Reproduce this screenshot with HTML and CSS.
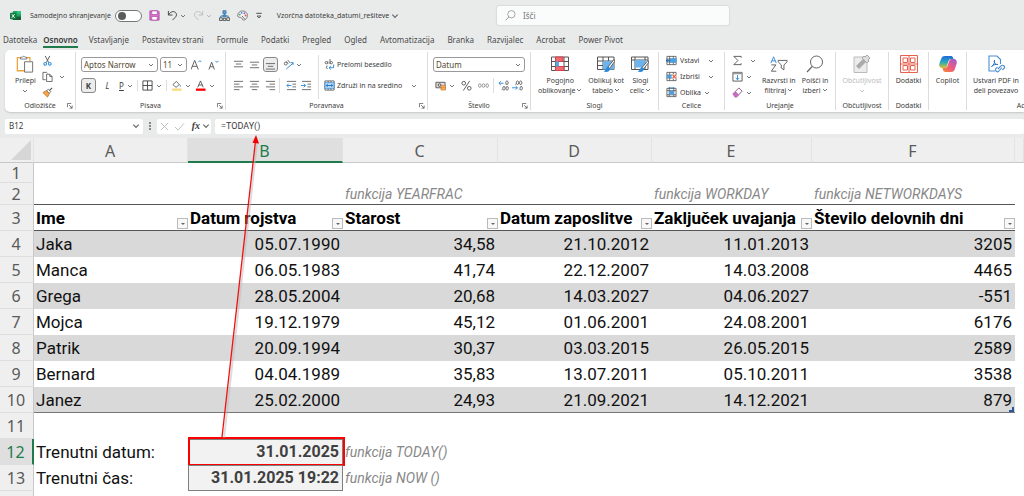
FILE: index.html
```html
<!DOCTYPE html>
<html lang="sl">
<head>
<meta charset="utf-8">
<title>Vzorčna datoteka_datumi_rešitev</title>
<link rel="stylesheet" href="styles.css">
</head>
<body>
<svg class="sprite" aria-hidden="true">
  <symbol id="chev" viewBox="0 0 6 6"><path d="M1 2l2 2 2-2" fill="none" stroke="#666" stroke-width=".9"/></symbol>
  <symbol id="launch" viewBox="0 0 7 7"><path d="M.5 5V.5H5M2.500 2.500l3.500 3.500M6 3v3H3" fill="none" stroke="#555" stroke-width=".9"/></symbol>
  <symbol id="excel" viewBox="0 0 12 12"><rect x="3" y="1" width="9" height="10" rx="1" fill="#21a366"/><path d="M7.500 1H11a1 1 0 0 1 1 1v2H7.500z" fill="#33c481"/><path d="M3 7h9v3a1 1 0 0 1-1 1H4a1 1 0 0 1-1-1z" fill="#185c37"/><rect y="3" width="7" height="7" rx="1" fill="#107c41"/><path d="M2 4.500l3 4M5 4.500l-3 4" stroke="#fff" stroke-width="1"/></symbol>
  <symbol id="save" viewBox="0 0 12 12"><path d="M1 1h9l1 1v9H1z" fill="#d97bd0" stroke="#b146a8"/><path d="M3 1h6v4H3zM3 7h6v4H3z" fill="#fff" stroke="#b146a8" stroke-width=".8"/></symbol>
  <symbol id="undo" viewBox="0 0 12 12"><path d="M1.500 1v4.500H6M1.500 5.500C4 1.500 7 1 9 2.500s1.600 4 0 5.500L6 11" fill="none" stroke="currentColor"/></symbol>
  <symbol id="redo" viewBox="0 0 12 12"><path d="M10.500 1v4.500H6M10.500 5.500C8 1.500 5 1 3 2.500s-1.600 4 0 5.500L6 11" fill="none" stroke="currentColor"/></symbol>
  <symbol id="org" viewBox="0 0 12 12"><path d="M6 4v2.500M2 9V6.500h8V9" fill="none" stroke="#1e75c0"/><path d="M4.300.700h3.400v3.300H4.300zM4.500 5.500h3v2h-3z" fill="#5aa5e0" stroke="#35699a" stroke-width=".8"/><path d="M.6 8.500h3v3h-3zM4.700 9h2.600v2.500H4.700zM8.400 8.500h3v3h-3z" fill="#e9ebea" stroke="#444" stroke-width=".9"/></symbol>
  <symbol id="palette" viewBox="0 0 12 12"><path d="M7 11c-1.500 0-1-1.500-2-2.500S1 8.500.700 6.500C.5 3 3.500 1 6 1c3 0 5.400 2 5.400 5S9 11 7 11z" fill="#f5f5f5" stroke="#666" stroke-width=".9"/><circle cx="3" cy="5" r="1" fill="#3fa66b"/><circle cx="5" cy="3.200" r="1" fill="#3d8fd8"/><circle cx="8" cy="3.500" r="1" fill="#9b59b6"/><circle cx="9.300" cy="6" r="1" fill="#e54b4b"/><path d="M5.500 6.500L8.500 10" stroke="#666"/></symbol>
  <symbol id="overflow" viewBox="0 0 6 6"><path d="M1 1h4" stroke="#555" stroke-width=".8"/><path d="M1.500 3h3L3 4.500z" fill="none" stroke="#555" stroke-width=".7"/></symbol>
  <symbol id="lens" viewBox="0 0 18 18"><circle cx="10.500" cy="7" r="6" fill="none" stroke="currentColor"/><path d="M6.200 11.500L1 17" stroke="currentColor" stroke-width="1.200"/></symbol>
  <symbol id="paste" viewBox="0 0 20 20"><path d="M5 3H1.500v14.500H10M12 3h3.500v4" fill="none" stroke="#eba53c" stroke-width="1.400"/><path d="M5 4.500v-2h2a1.600 1.600 0 0 1 3 0h2v2z" fill="#fff" stroke="#666" stroke-width=".9"/><path d="M9.500 7.500h9v11.500h-9z" fill="#fff" stroke="#666"/></symbol>
  <symbol id="cut" viewBox="0 0 12 12"><path d="M3.500 1l4 7.500M8.500 1l-4 7.500" stroke="#555" fill="none"/><circle cx="3.500" cy="9.600" r="1.500" fill="none" stroke="#3a96dd" stroke-width="1.200"/><circle cx="8.500" cy="9.600" r="1.500" fill="none" stroke="#3a96dd" stroke-width="1.200"/></symbol>
  <symbol id="copy" viewBox="0 0 12 12"><path d="M4 9.500H1v-8h4l1 1M5 3.500h3.500l2.500 2.500v5.500H5zM8.500 3.500V6H11" fill="none" stroke="#555" stroke-width=".9"/></symbol>
  <symbol id="brush" viewBox="0 0 12 12"><path d="M1 6l4-2 3 3-2 4z" fill="#f6a54a" stroke="#c9782a"/><path d="M5 4l2-1.500L9.500 5 8 7z" fill="#fff" stroke="#555" stroke-width=".8"/><path d="M8 4l3-3" stroke="#555" stroke-width="1.300"/></symbol>
  <symbol id="grow" viewBox="0 0 12 12"><path d="M0 11.500l4-10 4 10M1.500 8h5" fill="none" stroke="#555"/><path d="M8 3.500l1.700-1.700 1.700 1.700" fill="none" stroke="#2b88d8"/></symbol>
  <symbol id="shrink" viewBox="0 0 12 12"><path d="M1 11.500l3-8 3 8M2.200 8.500h3.600" fill="none" stroke="#555"/><path d="M8 2l1.700 1.700L11.400 2" fill="none" stroke="#2b88d8"/></symbol>
  <symbol id="borders" viewBox="0 0 12 12"><path d="M1 1h10v10H1zM6 1v10M1 6h10" fill="none" stroke="#444"/></symbol>
  <symbol id="fill" viewBox="0 0 12 12"><path d="M2 5l4-3.500 3 3.500-3.500 3z" fill="#fff" stroke="#555" stroke-width=".9"/><path d="M9.500 4.500q2 2 .8 3.500-1.300-.5-.8-3.500z" fill="#2b88d8"/><rect x="1" y="9.300" width="10.500" height="2.500" fill="#fbd982"/></symbol>
  <symbol id="color" viewBox="0 0 12 12"><path d="M3 8l3-7 3 7M4 5.500h4" fill="none" stroke="#555"/><rect x="1" y="9.300" width="10.500" height="2.500" fill="#f00"/></symbol>
  <symbol id="vtop" viewBox="0 0 12 12"><path d="M1 2.500h10M3 5.500h6M1 8.500h10" stroke="#555" stroke-width=".9"/></symbol>
  <symbol id="vmid" viewBox="0 0 12 12"><path d="M1 3.500h10M3 6.500h6M1 9.500h10" stroke="#555" stroke-width=".9"/></symbol>
  <symbol id="vbot" viewBox="0 0 12 12"><path d="M1 5h10M3 8h6M1 11h10" stroke="#555" stroke-width=".9"/></symbol>
  <symbol id="hleft" viewBox="0 0 12 12"><path d="M1 1.500h10M1 4.500h6M1 7.500h10M1 10.500h6" stroke="#555" stroke-width=".9"/></symbol>
  <symbol id="hmid" viewBox="0 0 12 12"><path d="M1 1.500h10M3 4.500h6M1 7.500h10M3 10.500h6" stroke="#555" stroke-width=".9"/></symbol>
  <symbol id="hright" viewBox="0 0 12 12"><path d="M1 1.500h10M5 4.500h6M1 7.500h10M5 10.500h6" stroke="#555" stroke-width=".9"/></symbol>
  <symbol id="orient" viewBox="0 0 12 12"><circle cx="3" cy="5" r="1.600" fill="none" stroke="#555" stroke-width=".9"/><path d="M3.500 2.500l2 2.500M5 1l3 3.500" fill="none" stroke="#555" stroke-width=".9"/><path d="M3.500 11L11 4.500M8.500 4H11v2.500" fill="none" stroke="#2b88d8"/></symbol>
  <symbol id="outdent" viewBox="0 0 12 12"><path d="M1 1.500h10M7 4.500h4M7 7.500h4M1 10.500h10" stroke="#555" stroke-width=".9"/><path d="M6 6H1M3 4L1 6l2 2" fill="none" stroke="#2b88d8"/></symbol>
  <symbol id="indent" viewBox="0 0 12 12"><path d="M1 1.500h10M7 4.500h4M7 7.500h4M1 10.500h10" stroke="#555" stroke-width=".9"/><path d="M0 6h5M3 4l2 2-2 2" fill="none" stroke="#2b88d8"/></symbol>
  <symbol id="wrap" viewBox="0 0 12 12"><circle cx="2.500" cy="4" r="1.300" fill="none" stroke="#555" stroke-width=".9"/><path d="M4.200 2.500V5.500M6.500 0v5.500" stroke="#555" stroke-width=".9"/><circle cx="8" cy="4" r="1.300" fill="none" stroke="#555" stroke-width=".9"/><path d="M4 7.500a1.500 1.500 0 1 0 0 3" fill="none" stroke="#555" stroke-width=".9"/><path d="M10.500 6v3.500H5.500M7.500 7.500l-2 2 2 2" fill="none" stroke="#2b88d8"/></symbol>
  <symbol id="merge" viewBox="0 0 12 12"><path d="M1 1h10v10H1zM4.500 1v2M7.500 1v2M4.500 9v2M7.500 9v2" fill="none" stroke="#555" stroke-width=".9"/><rect x="1" y="3" width="10" height="6" fill="#b9dcf7" stroke="#2b88d8" stroke-width=".8"/><path d="M2.500 6h7M4 4.500L2.500 6 4 7.500M8 4.500L9.500 6 8 7.500" fill="none" stroke="#1b6ec2"/></symbol>
  <symbol id="money" viewBox="0 0 12 12"><path d="M1 2.500h10v6H1z" fill="#ddd" stroke="#555"/><circle cx="5" cy="5.500" r="1.500" fill="none" stroke="#555"/><path d="M6.500 6h5v5h-5z" fill="#f6b26b" stroke="#c9782a" stroke-width=".7"/><path d="M6.500 8.500h5" stroke="#c9782a" stroke-width=".7"/></symbol>
  <symbol id="percent" viewBox="0 0 12 12"><circle cx="3" cy="3.500" r="2" fill="none" stroke="#555"/><circle cx="9" cy="9" r="2" fill="none" stroke="#555"/><path d="M9.500 1L2.500 11.500" stroke="#555"/></symbol>
  <symbol id="thousand" viewBox="0 0 12 12"><g fill="none" stroke="#888" stroke-width=".9"><ellipse cx="2" cy="6" rx="1.400" ry="2"/><ellipse cx="6" cy="6" rx="1.400" ry="2"/><ellipse cx="10" cy="6" rx="1.400" ry="2"/></g></symbol>
  <symbol id="decup" viewBox="0 0 12 12"><g fill="none" stroke="#555" stroke-width=".9"><ellipse cx="9.800" cy="3" rx="1.300" ry="2"/><ellipse cx="6.500" cy="9" rx="1.300" ry="2"/><ellipse cx="10" cy="9" rx="1.300" ry="2"/><path d="M4 10.500h.8M7.500 4.500h.5"/></g><path d="M6 3.500H1M3 1.500l-2 2 2 2" fill="none" stroke="#2b88d8"/></symbol>
  <symbol id="decdown" viewBox="0 0 12 12"><g fill="none" stroke="#555" stroke-width=".9"><ellipse cx="6" cy="3" rx="1.300" ry="2"/><ellipse cx="9.500" cy="3" rx="1.300" ry="2"/><ellipse cx="10" cy="9" rx="1.300" ry="2"/><path d="M3.500 4.500h.8M7.500 10.500h.6"/></g><path d="M0 8.500h6M4 6.500l2 2-2 2" fill="none" stroke="#2b88d8"/></symbol>
  <symbol id="cond" viewBox="0 0 18 18"><path d="M.5 2h17v13.500H.5zM.5 6.500h17M.5 11.500h17M4.500 2v13.500M13 2v13.500" fill="#fff" stroke="#555"/><path d="M4.500 2H12v4.500H4.500zM4.500 11.500H13v4H4.500z" fill="#f06a72" stroke="#d6404b"/><path d="M4.500 6.500H8v5H4.500z" fill="#5aa9e6"/></symbol>
  <symbol id="ftable" viewBox="0 0 18 18"><path d="M.5 2h16.500v12.500H.5zM.5 6H17M.5 10.500H17M6 2v12.500M11.500 2v12.500" fill="#fff" stroke="#555"/><path d="M6 6h11v8.500H6z" fill="#6db3ec"/><path d="M17 4.500l-6 7.500 1.500 1.500L18 6z" fill="#fff" stroke="#555" stroke-width=".9"/><path d="M11 11.500c-2 .5-1.500 3.500-4.500 5 3 1 6.500.500 6.500-3z" fill="#2b88d8"/></symbol>
  <symbol id="cstyle" viewBox="0 0 18 18"><path d="M.5 2h16.500v12.500H.5zM.5 5H17M4 2v12.500M14 2v12.500" fill="#fff" stroke="#555"/><path d="M4 5h10.500v7.500H4z" fill="#6db3ec"/><path d="M17 5.500l-6 7 1.500 1.500L18 7z" fill="#fff" stroke="#555" stroke-width=".9"/><path d="M11 12c-2 .5-1.500 3-4.500 4.500 3 1 6.500.500 6.500-3z" fill="#2b88d8"/></symbol>
  <symbol id="cins" viewBox="0 0 12 12"><path d="M1 1.500h10v9H1zM1 4.500h10M1 7.500h10M4 1.500v9M8 1.500v9" fill="#fff" stroke="#555" stroke-width=".9"/><path d="M4.500 3.500h7v5h-7z" fill="#4b9fe3"/><path d="M5 6H0M2 4L0 6l2 2" fill="none" stroke="#1b6ec2"/></symbol>
  <symbol id="cdel" viewBox="0 0 12 12"><path d="M1 1.500h10v9H1zM1 4.500h10M1 7.500h10M4 1.500v9M8 1.500v9" fill="#fff" stroke="#555" stroke-width=".9"/><path d="M1 4h5v4H1z" fill="#4b9fe3"/><path d="M6.500 3.500h5v5h-5z" fill="#fff"/><path d="M7 4l4 4M11 4L7 8" stroke="#e8542c" stroke-width="1.200"/></symbol>
  <symbol id="cfmt" viewBox="0 0 12 12"><path d="M1 1.500h10v9H1zM1 4h10M1 8.500h10M3.500 1.500v9M8.500 1.500v9" fill="#fff" stroke="#555" stroke-width=".9"/><path d="M3.500 4h5v4.500h-5z" fill="#4b9fe3"/><path d="M3.500 0v2M8.500 0v2M3.500 1h5" stroke="#1b6ec2" stroke-width=".8"/></symbol>
  <symbol id="sum" viewBox="0 0 12 12"><path d="M10 3V1.500H2L6.500 6 2 10.500h8V9" fill="none" stroke="#555"/></symbol>
  <symbol id="filldn" viewBox="0 0 12 12"><path d="M1 1.500h10v9.500H1z" fill="#fff" stroke="#555"/><path d="M1 1.500h10v2H1z" fill="#999"/><path d="M6 4.500v5M4 7.500l2 2 2-2" fill="none" stroke="#2b88d8"/></symbol>
  <symbol id="clear" viewBox="0 0 12 12"><path d="M1 7.500L7.500 1l3.500 3.500L5 11H3.500z" fill="#fff" stroke="#8a4f86"/><path d="M1 7.500L4 4.500 7.500 8.500 5 11H3.500z" fill="#c86bc0"/></symbol>
  <symbol id="sort" viewBox="0 0 20 18"><path d="M1 8l3-7 3 7M2 5.500h4" fill="none" stroke="#2b88d8"/><path d="M1.500 10h5l-5 7h5.500" fill="none" stroke="#555"/><path d="M9 5h10v1.500L15.500 10v5.500l-3-2V10L9 6.500z" fill="none" stroke="#555"/></symbol>
  <symbol id="sens" viewBox="0 0 18 18"><path d="M1 2h13v15.500H1z" fill="#ececec" stroke="#bbb"/><path d="M3 11l7-7 3 3-7 7z" fill="#aaa"/><path d="M9 3l2-2 1 1 2-2 3 3-2 2 1 1-2 2z" fill="#ddd" stroke="#aaa"/></symbol>
  <symbol id="addin" viewBox="0 0 18 18"><path d="M.5.5h17v17H.5zM3 3h4.500v4.500H3zM10.500 3H15v4.500h-4.500zM3 10.500h4.500V15H3zM10.500 10.500H15V15h-4.500zM9 .5v17M.5 9h17" fill="#fff" stroke="#e8604f"/></symbol>
  <linearGradient id="cg1" x1="0" y1="0" x2="0" y2="1"><stop offset="0" stop-color="#2368d8"/><stop offset=".5" stop-color="#23a7c0"/><stop offset="1" stop-color="#d8c32b"/></linearGradient>
  <linearGradient id="cg2" x1="1" y1="0" x2="0" y2="1"><stop offset="0" stop-color="#9060d8"/><stop offset=".5" stop-color="#ed5a84"/><stop offset="1" stop-color="#f68a2a"/></linearGradient>
  <symbol id="copilot" viewBox="0 0 18 18"><path d="M6 1h6c1 0 1.700.700 2 1.500L14.500 4H12c-1.400 0-2 .8-2.500 2L8 11c-.5 1.500-1 2-2.500 2H3C.5 13-.3 10.500.500 8L2.500 3C3 1.700 4 1 6 1z" fill="url(#cg1)"/><path d="M12 17H6.500c-1.200 0-2-.8-2.500-2l-.5-2h2.300C7.200 13 8 12.200 8.500 11L10 6.500C10.500 5 11 4 12.500 4H15c2.500 0 3.300 2.500 2.500 5l-2 6c-.5 1.300-1.500 2-3.500 2z" fill="url(#cg2)"/></symbol>
  <symbol id="pdf" viewBox="0 0 18 18"><path d="M8 16H2V1h8l3.500 3.500V9" fill="none" stroke="#4a8fd0" stroke-width="1.100"/><path d="M4.500 11.500c2-1 3.500-4 3-6.500-.8 3 1 5 3.500 4.500-2-.5-4.500 0-6.500 2z" fill="none" stroke="#2b78c8"/><path d="M11 14l3-3a1.800 1.800 0 0 1 3 2.500L15.500 15M15 12.500L12 16a1.800 1.800 0 0 1-3-2.500l1.500-1.300" fill="none" stroke="#4a8fd0" stroke-width="1.100"/></symbol>
</svg>

<div class="app">
  <header class="titlebar">
    <div class="quick">
      <svg class="ic"><use href="#excel"/></svg>
      <label class="autosave">Samodejno shranjevanje <input type="checkbox" role="switch" class="switch"></label>
      <button aria-label="Shrani"><svg class="ic"><use href="#save"/></svg></button>
      <button aria-label="Razveljavi" class="split"><svg class="ic"><use href="#undo"/></svg><svg class="chev"><use href="#chev"/></svg></button>
      <button aria-label="Uveljavi" class="split off"><svg class="ic"><use href="#redo"/></svg><svg class="chev"><use href="#chev"/></svg></button>
      <button aria-label="Struktura"><svg class="ic"><use href="#org"/></svg></button>
      <button aria-label="Barve"><svg class="ic"><use href="#palette"/></svg></button>
      <button aria-label="Več"><svg class="chev big"><use href="#overflow"/></svg></button>
      <button class="docname">Vzorčna datoteka_datumi_rešiteve<svg class="chev big"><use href="#chev"/></svg></button>
    </div>
    <label class="search"><svg class="ic"><use href="#lens"/></svg><input type="search" placeholder="Išči" aria-label="Išči"></label>
  </header>

  <nav class="tabs">
    <a href="#">Datoteka</a><a href="#" class="current">Osnovno</a><a href="#">Vstavljanje</a><a href="#">Postavitev strani</a><a href="#">Formule</a><a href="#">Podatki</a><a href="#">Pregled</a><a href="#">Ogled</a><a href="#">Avtomatizacija</a><a href="#">Branka</a><a href="#">Razvijalec</a><a href="#">Acrobat</a><a href="#">Power Pivot</a>
  </nav>

  <div class="ribbon">
    <section class="group g-clip">
      <div class="body">
        <button class="large"><svg class="bigic"><use href="#paste"/></svg><span>Prilepi</span><svg class="chev"><use href="#chev"/></svg></button>
        <div class="stack">
          <button aria-label="Izreži"><svg class="ic"><use href="#cut"/></svg></button>
          <button aria-label="Kopiraj" class="split wide"><svg class="ic"><use href="#copy"/></svg><svg class="chev"><use href="#chev"/></svg></button>
          <button aria-label="Preslikovalnik oblik"><svg class="ic"><use href="#brush"/></svg></button>
        </div>
      </div>
      <footer>Odložišče<svg class="launch"><use href="#launch"/></svg></footer>
    </section>

    <section class="group g-font">
      <div class="body rows">
        <div class="row tight">
          <span class="pick fontname"><select aria-label="Pisava"><option>Aptos Narrow</option></select><svg class="chev"><use href="#chev"/></svg></span>
          <span class="pick fontsize"><select aria-label="Velikost pisave"><option>11</option></select><svg class="chev"><use href="#chev"/></svg></span>
          <button class="tool" aria-label="Povečaj"><svg class="ic"><use href="#grow"/></svg></button>
          <button class="tool" aria-label="Pomanjšaj"><svg class="ic"><use href="#shrink"/></svg></button>
        </div>
        <div class="row">
          <button class="tool pressed"><b>K</b></button>
          <button class="tool"><i>L</i></button>
          <button class="split"><u>P</u><svg class="chev"><use href="#chev"/></svg></button>
          <button class="split line" aria-label="Obrobe"><svg class="ic"><use href="#borders"/></svg><svg class="chev"><use href="#chev"/></svg></button>
          <button class="split line" aria-label="Barva polnila"><svg class="ic"><use href="#fill"/></svg><svg class="chev"><use href="#chev"/></svg></button>
          <button class="split" aria-label="Barva pisave"><svg class="ic"><use href="#color"/></svg><svg class="chev"><use href="#chev"/></svg></button>
        </div>
      </div>
      <footer>Pisava<svg class="launch"><use href="#launch"/></svg></footer>
    </section>

    <section class="group g-align">
      <div class="body">
        <div class="rows">
          <div class="row none">
            <button class="tool" aria-label="Poravnaj na vrh"><svg class="ic"><use href="#vtop"/></svg></button>
            <button class="tool" aria-label="Poravnaj na sredino"><svg class="ic"><use href="#vmid"/></svg></button>
            <button class="tool pressed" aria-label="Poravnaj na dno"><svg class="ic"><use href="#vbot"/></svg></button>
            <button class="split turn" aria-label="Usmerjenost"><svg class="ic"><use href="#orient"/></svg><svg class="chev"><use href="#chev"/></svg></button>
          </div>
          <div class="row none">
            <button class="tool" aria-label="Levo"><svg class="ic"><use href="#hleft"/></svg></button>
            <button class="tool" aria-label="Sredina"><svg class="ic"><use href="#hmid"/></svg></button>
            <button class="tool" aria-label="Desno"><svg class="ic"><use href="#hright"/></svg></button>
            <button class="tool line" aria-label="Zmanjšaj zamik"><svg class="ic"><use href="#outdent"/></svg></button>
            <button class="tool" aria-label="Povečaj zamik"><svg class="ic"><use href="#indent"/></svg></button>
          </div>
        </div>
        <div class="rows text">
          <button class="row"><svg class="ic"><use href="#wrap"/></svg>Prelomi besedilo</button>
          <button class="row"><svg class="ic"><use href="#merge"/></svg>Združi in na sredino<svg class="chev end"><use href="#chev"/></svg></button>
        </div>
      </div>
      <footer>Poravnava<svg class="launch"><use href="#launch"/></svg></footer>
    </section>

    <section class="group g-num">
      <div class="body rows">
        <span class="pick"><select aria-label="Oblika števila"><option>Datum</option></select><svg class="chev"><use href="#chev"/></svg></span>
        <div class="row tight">
          <button class="split" aria-label="Valuta"><svg class="ic"><use href="#money"/></svg><svg class="chev"><use href="#chev"/></svg></button>
          <button class="tool" aria-label="Odstotek"><svg class="ic"><use href="#percent"/></svg></button>
          <button class="tool" aria-label="Tisočice"><svg class="ic"><use href="#thousand"/></svg></button>
          <button class="tool line" aria-label="Več decimalk"><svg class="ic"><use href="#decup"/></svg></button>
          <button class="tool" aria-label="Manj decimalk"><svg class="ic"><use href="#decdown"/></svg></button>
        </div>
      </div>
      <footer>Število<svg class="launch"><use href="#launch"/></svg></footer>
    </section>

    <section class="group g-style">
      <div class="body">
        <button class="large"><svg class="bigic"><use href="#cond"/></svg><span>Pogojno<br>oblikovanje<svg class="chev"><use href="#chev"/></svg></span></button>
        <button class="large"><svg class="bigic"><use href="#ftable"/></svg><span>Oblikuj kot<br>tabelo<svg class="chev"><use href="#chev"/></svg></span></button>
        <button class="large"><svg class="bigic"><use href="#cstyle"/></svg><span>Slogi<br>celic<svg class="chev"><use href="#chev"/></svg></span></button>
      </div>
      <footer>Slogi</footer>
    </section>

    <section class="group g-cells">
      <div class="body stack">
        <button class="entry"><svg class="ic"><use href="#cins"/></svg>Vstavi<svg class="chev end"><use href="#chev"/></svg></button>
        <button class="entry"><svg class="ic"><use href="#cdel"/></svg>Izbriši<svg class="chev end"><use href="#chev"/></svg></button>
        <button class="entry"><svg class="ic"><use href="#cfmt"/></svg>Oblika<svg class="chev"><use href="#chev"/></svg></button>
      </div>
      <footer>Celice</footer>
    </section>

    <section class="group g-edit">
      <div class="body">
        <div class="stack">
          <button class="entry" aria-label="Samodejna vsota"><svg class="ic"><use href="#sum"/></svg><svg class="chev end"><use href="#chev"/></svg></button>
          <button class="entry" aria-label="Polnilo"><svg class="ic"><use href="#filldn"/></svg><svg class="chev"><use href="#chev"/></svg></button>
          <button class="entry" aria-label="Počisti"><svg class="ic"><use href="#clear"/></svg><svg class="chev"><use href="#chev"/></svg></button>
        </div>
        <button class="large"><svg class="bigic"><use href="#sort"/></svg><span>Razvrsti in<br>filtriraj<svg class="chev"><use href="#chev"/></svg></span></button>
        <button class="large"><svg class="bigic lens"><use href="#lens"/></svg><span>Poišči in<br>izberi<svg class="chev"><use href="#chev"/></svg></span></button>
      </div>
      <footer>Urejanje</footer>
    </section>

    <section class="group g-sens">
      <div class="body"><button class="large off" disabled><svg class="bigic"><use href="#sens"/></svg><span>Občutljivost</span><svg class="chev"><use href="#chev"/></svg></button></div>
      <footer>Občutljivost</footer>
    </section>
    <section class="group g-add">
      <div class="body"><button class="large"><svg class="bigic"><use href="#addin"/></svg><span>Dodatki</span></button></div>
      <footer>Dodatki</footer>
    </section>
    <section class="group g-cop">
      <div class="body"><button class="large"><svg class="bigic"><use href="#copilot"/></svg><span>Copilot</span></button></div>
    </section>
    <section class="group g-acro">
      <div class="body"><button class="large"><svg class="bigic"><use href="#pdf"/></svg><span>Ustvari PDF in<br>deli povezavo</span></button></div>
      <footer>Acrobat</footer>
    </section>
  </div>

  <div class="formulabar">
    <label class="namebox"><input value="B12" aria-label="Polje z imenom"><svg class="chev big"><use href="#chev"/></svg></label>
    <svg class="dots" viewBox="0 0 4 12"><path d="M1 2h2v2H1zM1 5h2v2H1zM1 8h2v2H1z" fill="#888"/></svg>
    <div class="fx">
      <button aria-label="Prekliči"><svg class="ic" viewBox="0 0 12 12"><path d="M2 2l8 8M10 2l-8 8" stroke="#bbb"/></svg></button>
      <button aria-label="Vnesi"><svg class="ic" viewBox="0 0 12 12"><path d="M1 6.500L4.500 10 11 2.500" fill="none" stroke="#bbb"/></svg></button>
      <button aria-label="Vstavi funkcijo" class="fxbtn"><i>fx</i><svg class="chev big"><use href="#chev"/></svg></button>
    </div>
    <input class="formula" value="=TODAY()" aria-label="Vnosna vrstica">
  </div>

  <main class="sheet">
    <table>
      <colgroup><col class="c-head"><col class="c-a"><col class="c-b"><col class="c-c"><col class="c-d"><col class="c-e"><col class="c-f"><col></colgroup>
      <thead>
        <tr><th><svg class="corner" viewBox="0 0 20 20"><path d="M20 0v20H0z" fill="#d6d6d6"/></svg></th><th>A</th><th class="sel">B</th><th>C</th><th>D</th><th>E</th><th>F</th><th></th></tr>
      </thead>
      <tbody>
        <tr class="r1"><th>1</th><td></td><td></td><td></td><td></td><td></td><td></td><td></td></tr>
        <tr class="r2"><th>2</th><td></td><td></td><td class="note">funkcija YEARFRAC</td><td></td><td class="note">funkcija WORKDAY</td><td class="note">funkcija NETWORKDAYS</td><td></td></tr>
        <tr class="heads"><th>3</th><td>Ime<button class="filter" aria-label="Filter"></button></td><td>Datum rojstva<button class="filter" aria-label="Filter"></button></td><td>Starost<button class="filter" aria-label="Filter"></button></td><td>Datum zaposlitve<button class="filter" aria-label="Filter"></button></td><td>Zaključek uvajanja<button class="filter" aria-label="Filter"></button></td><td>Število delovnih dni<button class="filter" aria-label="Filter"></button></td><td></td></tr>
        <tr class="data band"><th>4</th><td>Jaka</td><td>05.07.1990</td><td>34,58</td><td>21.10.2012</td><td>11.01.2013</td><td>3205</td><td></td></tr>
        <tr class="data"><th>5</th><td>Manca</td><td>06.05.1983</td><td>41,74</td><td>22.12.2007</td><td>14.03.2008</td><td>4465</td><td></td></tr>
        <tr class="data band"><th>6</th><td>Grega</td><td>28.05.2004</td><td>20,68</td><td>14.03.2027</td><td>04.06.2027</td><td>-551</td><td></td></tr>
        <tr class="data"><th>7</th><td>Mojca</td><td>19.12.1979</td><td>45,12</td><td>01.06.2001</td><td>24.08.2001</td><td>6176</td><td></td></tr>
        <tr class="data band"><th>8</th><td>Patrik</td><td>20.09.1994</td><td>30,37</td><td>03.03.2015</td><td>26.05.2015</td><td>2589</td><td></td></tr>
        <tr class="data"><th>9</th><td>Bernard</td><td>04.04.1989</td><td>35,83</td><td>13.07.2011</td><td>05.10.2011</td><td>3538</td><td></td></tr>
        <tr class="data band last"><th>10</th><td>Janez</td><td>25.02.2000</td><td>24,93</td><td>21.09.2021</td><td>14.12.2021</td><td class="grip">879</td><td></td></tr>
        <tr><th>11</th><td></td><td></td><td></td><td></td><td></td><td></td><td></td></tr>
        <tr><th class="sel">12</th><td>Trenutni datum:</td><td class="calc marked">31.01.2025</td><td class="note">funkcija TODAY()</td><td></td><td></td><td></td><td></td></tr>
        <tr><th>13</th><td>Trenutni čas:</td><td class="calc">31.01.2025 19:22</td><td class="note">funkcija NOW ()</td><td></td><td></td><td></td><td></td></tr>
        <tr class="r14"><th></th><td></td><td></td><td></td><td></td><td></td><td></td><td></td></tr>
      </tbody>
    </table>
    <svg class="arrow" viewBox="0 0 44 304" aria-hidden="true"><path d="M6 303L39 8" stroke="#bbb" stroke-width="2" opacity=".5"/><path d="M4 302L37.500 6" stroke="#f01010" stroke-width="1.300"/><path d="M38 0l3 8.500-6.500-.7z" fill="#f00000"/></svg>
  </main>
</div>
</body>
</html>
```
FILE: styles.css
```css
* { box-sizing: border-box; }
body { margin: 0; overflow: hidden; background: #fff; font: 7px/10px "Noto Sans", sans-serif; color: #3c3c3c; }
button, input, select { margin: 0; padding: 0; border: 0; background: none; font: inherit; color: inherit; outline: 0; }
button { display: flex; align-items: center; justify-content: center; }
.sprite { position: absolute; width: 0; height: 0; }
svg { flex: none; }
.ic { width: 11px; height: 11px; display: block; }
.chev { width: 6px; height: 6px; }
.chev.big { width: 8px; height: 8px; }

.app { display: flex; flex-direction: column; background: #e9ebea; }

.titlebar { display: flex; height: 31px; align-items: center; padding-left: 10px; }
.quick { display: flex; align-items: center; gap: 7px; flex: 0 0 487px; }
.autosave { display: flex; align-items: center; gap: 4px; margin-left: 2px; white-space: nowrap; }
.switch { appearance: none; width: 27px; height: 12px; border: 1px solid #777; border-radius: 6px; background: #fff; display: flex; align-items: center; }
.switch::before { content: ""; width: 8px; height: 8px; margin-left: 2px; border-radius: 4px; background: #5c5c5c; }
.split { gap: 2px; }
.off { color: #bbb; }
.off .chev { opacity: .4; }
.docname { margin-left: 7px; gap: 2px; white-space: nowrap; }
.search { display: flex; align-items: center; gap: 7px; flex: 0 1 232px; height: 19px; padding: 0 8px; background: #fafcfb; border-radius: 2px; box-shadow: 0 0 2px #b5b7b6; color: #777; }
.search input { flex: 1; min-width: 0; font-size: 8px; }
.search input::placeholder { color: #777; }

.tabs { display: flex; gap: 13px; padding-left: 3px; height: 19px; font-size: 8px; line-height: 18px; white-space: nowrap; }
.tabs a { color: #4a4a4a; text-decoration: none; height: 17px; }
.tabs a:first-child { margin-right: -7px; }
.tabs .current { margin-right: -2px; font-weight: 600; color: #3c3c3c; border-bottom: 2px solid #1f7a4c; }

.ribbon { display: flex; margin-left: 5px; padding: 2px 0; height: 62px; background: #fff; border-radius: 5px 0 0 5px; box-shadow: 0 1px 2px #c4c6c5; overflow: hidden; }
.group { display: flex; flex-direction: column; flex: none; border-right: 1px solid #dcdcdc; }
.body { display: flex; flex: 1; }
.group footer { height: 8px; line-height: 8px; position: relative; text-align: center; }
.launch { position: absolute; right: 2px; top: 1px; width: 6px; height: 6px; }
.g-clip { width: 71px; }
.g-font { width: 150px; }
.g-align { width: 202px; }
.g-num { width: 103px; }
.g-style { width: 128px; }
.g-cells { width: 66px; }
.g-edit { width: 111px; }
.g-sens { width: 53px; }
.g-add { width: 40px; }
.g-cop { width: 38px; }
.g-acro { width: 126px; }

.rows { display: flex; flex-direction: column; gap: 6px; padding-top: 5px; }
.row { display: flex; align-items: center; height: 15px; gap: 4px; }
.row.tight { gap: 2px; }
.row.none { gap: 1px; }
.tool { width: 15px; height: 15px; font-size: 8px; }
.tool .ic { width: 11px; height: 11px; }
.pressed { border: 1px solid #888; border-radius: 3px; background: #ececec; }
.line { border-left: 1px solid #ddd; padding-left: 4px; }
.g-font .split { font-size: 8px; gap: 3px; }
.g-font .rows { padding-left: 5px; }
.pick { display: flex; align-items: center; height: 15px; padding: 0 3px 0 2px; border: 1px solid #999; border-radius: 3px; }
.pick select { appearance: none; flex: 1; min-width: 0; font-size: 8px; line-height: 12px; color: #54482f; }
.fontname { width: 77px; }
.fontsize { width: 27px; }
.g-align .rows:first-child { padding-left: 5px; width: 92px; }
.g-align .turn { margin-left: 4px; }
.g-align .line { width: 19px; }
.g-align .text { flex: 1; margin: 3px 0; padding: 2px 10px 0 5px; border-left: 1px solid #ddd; }
.g-align .text .row { justify-content: flex-start; gap: 2px; white-space: nowrap; }
.end { margin-left: auto; }
.g-num .body { padding: 5px 5px 0; }
.g-num .row { padding-left: 2px; }
.g-num .row .split { gap: 3px; margin-right: 2px; }

.large { flex-direction: column; justify-content: flex-start; padding-top: 3px; white-space: nowrap; }
.bigic { width: 18px; height: 18px; margin-bottom: 3px; }
.bigic.lens { color: #666; }
.large > span { text-align: center; }
.large > .chev { margin-top: 2px; }
.large span .chev { margin-left: 1px; }
.stack { display: flex; flex-direction: column; gap: 5px; padding-top: 3px; align-items: flex-start; }
.stack button { height: 11px; }
.stack .wide { gap: 6px; }
.g-clip .body { padding-left: 10px; gap: 6px; }
.g-style .body { justify-content: space-around; padding: 0 4px; }
.g-cells .stack { padding: 3px 10px 0 7px; align-items: stretch; }
.entry { justify-content: flex-start; gap: 3px; }
.g-edit .body { gap: 6px; padding-left: 7px; }
.g-edit .stack { width: 24px; align-items: stretch; }
.g-sens .body, .g-add .body, .g-cop .body { justify-content: center; }
.g-acro .body { padding-left: 6px; }

.formulabar { display: flex; align-items: center; height: 26px; padding-left: 5px; padding-top: 2px; gap: 4px; }
.namebox, .fx, .formula { height: 15px; background: #fff; border-radius: 2px; }
.namebox { display: flex; align-items: center; flex: 0 0 138px; padding: 0 3px 0 4px; }
.namebox input { flex: 1; min-width: 0; font-size: 8px; }
.dots { width: 4px; height: 12px; margin: 0 1px; }
.fx { display: flex; align-items: center; gap: 4px; flex: 0 0 54px; padding: 0 1px 0 2px; }
.fxbtn { margin-left: auto; gap: 2px; font: italic bold 10px/12px "Liberation Serif", serif; }
.formula { flex: 1; min-width: 0; padding-left: 6px; font-family: Roboto, sans-serif; font-size: 9px; }

.sheet { position: relative; background: #fff; }
table { width: 100%; table-layout: fixed; border-collapse: separate; border-spacing: 0; font: 17px/20px Roboto, sans-serif; color: #111; }
.c-head { width: 34px; }
.c-a, .c-d { width: 154px; }
.c-b, .c-c { width: 155px; }
.c-e { width: 160px; }
.c-f { width: 203px; }
tr { height: 26px; }
th, td { padding: 0 3px 0 2px; white-space: nowrap; }
th { background: #efefef; font: 16px/18px "Noto Sans", sans-serif; color: #5a5a5a; }
thead tr { height: 25px; }
thead th { padding-top: 2px; border-bottom: 1px solid #c8c8c8; border-right: 1px solid #e2e2e2; }
thead th:first-child { padding: 0 2px; }
tbody th { border-right: 1px solid #c8c8c8; border-bottom: 1px solid #dedede; }
thead .sel { background: #dfdfdf; color: #1f7a4c; border-bottom: 2px solid #1f7a4c; }
tbody .sel { background: #dfdfdf; color: #1f7a4c; border-right: 2px solid #1f7a4c; }
.corner { display: block; width: 20px; height: 20px; margin-left: auto; }
.r1 { height: 20px; }
.r2 { height: 22px; }
.r14 { height: 7px; }
.r1 th, .r2 th { line-height: 16px; }
.note { font-size: 14px; font-style: italic; color: #888; }
.r2 td:not(:last-child), .heads td:not(:last-child) { border-bottom: 1px solid #555; }
.heads td { position: relative; font-weight: bold; color: #000; }
.filter { position: absolute; right: 0; bottom: 1px; width: 11px; height: 11px; border: 1px solid #bbb; background: #f8f8f8; }
.filter::before { content: ""; border: 2px solid transparent; border-top-color: #666; border-bottom: 0; }
.data td:not(:nth-child(2)) { text-align: right; }
.band td:not(:last-child) { background: #d9d9d9; }
.last td:not(:last-child) { border-bottom: 1px solid #777; }
.grip { position: relative; }
.grip::after { content: ""; position: absolute; right: 1px; bottom: 0; width: 5px; height: 5px; background: #2b5797; clip-path: polygon(60% 0, 100% 0, 100% 100%, 0 100%, 0 60%, 60% 60%); }
.calc { position: relative; text-align: right; font-size: 16px; font-weight: bold; color: #3f3f3f; background: #f2f2f2; border: 1px solid #7f7f7f; }
.marked::after { content: ""; position: absolute; inset: -3px -3px -2px -1px; border: 2px solid #f00; }
.arrow { position: absolute; left: 218px; top: -3px; width: 44px; height: 304px; }
```
